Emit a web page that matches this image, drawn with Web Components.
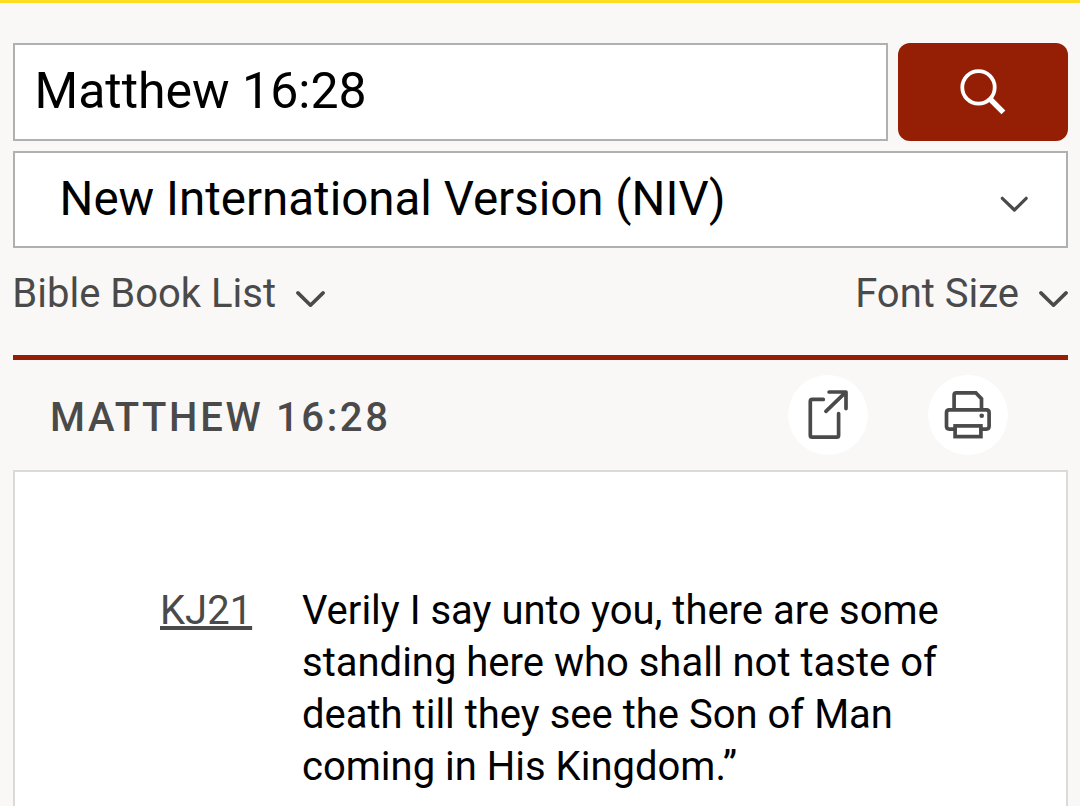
<!DOCTYPE html>
<html lang="en">
<head>
    <meta charset="UTF-8">
    <meta name="viewport" content="width=device-width, initial-scale=1.0">
    <title>Matthew 16:28</title>
    <style>
        body {
            margin: 0;
            height: 806px;
            overflow: hidden;
            background: #f9f8f7;
            font-family: Roboto, "Liberation Sans", sans-serif;
            color: #000;
        }
    </style>
</head>
<body>
    <passage-page>
        <search-bar slot="search" value="Matthew 16:28"></search-bar>
        <version-select slot="version">New International Version (NIV)</version-select>
        <drop-link slot="links">Bible Book List</drop-link>
        <drop-link slot="links">Font Size</drop-link>
        <passage-header slot="header">Matthew 16:28</passage-header>
        <verse-row version="KJ21">Verily I say unto you, there are some standing here who shall not taste of death till they see the Son of Man coming in His Kingdom.”</verse-row>
    </passage-page>

    <script>
        // Attach an open shadow root and fill it
        function render(host, html) {
            host.attachShadow({ mode: 'open' }).innerHTML = html;
        }

        // Page frame: yellow strip, search area, red rule, results panel
        class PassagePage extends HTMLElement {
            constructor() {
                super();
                render(this, `
                    <style>
                        :host {
                            display: flex;
                            flex-direction: column;
                            box-sizing: border-box;
                            height: 806px;
                            border-top: 3px solid #ffde22;
                            padding: 40px 12px 0 13px;
                        }
                        .form {
                            display: flex;
                            flex-direction: column;
                            gap: 10px;
                        }
                        .links {
                            display: flex;
                            justify-content: space-between;
                            height: 107px;
                            border-bottom: 5px solid #941f04;
                        }
                        .panel {
                            flex: 1;
                            box-sizing: border-box;
                            border: 2px solid #dbdad9;
                            border-bottom: none;
                            background: #fff;
                            padding: 113px 110px 0 145px;
                        }
                    </style>
                    <div class="form">
                        <slot name="search"></slot>
                        <slot name="version"></slot>
                    </div>
                    <div class="links"><slot name="links"></slot></div>
                    <slot name="header"></slot>
                    <div class="panel"><slot></slot></div>
                `);
            }
        }
        customElements.define('passage-page', PassagePage);

        class SearchBar extends HTMLElement {
            constructor() {
                super();
                render(this, `
                    <style>
                        :host {
                            display: flex;
                            gap: 10px;
                            height: 98px;
                        }
                        .field {
                            flex: 1;
                            box-sizing: border-box;
                            border: 2px solid #b0b0b0;
                            background: #fff;
                            padding-left: 19.5px;
                            font-size: 50px;
                            line-height: 92px;
                            white-space: nowrap;
                        }
                        button {
                            width: 170px;
                            border: none;
                            border-radius: 12px;
                            padding: 0;
                            background: #941f04;
                        }
                        svg {
                            display: block;
                        }
                    </style>
                    <div class="field"></div>
                    <button aria-label="Search">
                        <svg width="170" height="98" fill="none" stroke="#fff">
                            <circle cx="80.5" cy="44.4" r="16.2" stroke-width="3.8"/>
                            <path d="M91.5 55.5 105.4 69.4" stroke-width="5.4"/>
                        </svg>
                    </button>
                `);
            }

            connectedCallback() {
                this.shadowRoot.querySelector('.field').textContent = this.getAttribute('value');
            }
        }
        customElements.define('search-bar', SearchBar);

        class VersionSelect extends HTMLElement {
            constructor() {
                super();
                render(this, `
                    <style>
                        :host {
                            display: flex;
                            justify-content: space-between;
                            box-sizing: border-box;
                            height: 97px;
                            border: 2px solid #b0b0b0;
                            background: #fff;
                            padding: 0 38px 0 44.5px;
                            font-size: 47.5px;
                            line-height: 92px;
                            white-space: nowrap;
                        }
                        svg {
                            margin-top: 43px;
                        }
                    </style>
                    <span><slot></slot></span>
                    <svg width="28" height="16" fill="none" stroke="#4a4a4a" stroke-width="3.2" stroke-linecap="round" stroke-linejoin="round">
                        <path d="M2.3 2.3 14.4 14 26.2 2.3"/>
                    </svg>
                `);
            }
        }
        customElements.define('version-select', VersionSelect);

        class DropLink extends HTMLElement {
            constructor() {
                super();
                render(this, `
                    <style>
                        :host {
                            display: flex;
                            gap: 20px;
                            margin-left: -0.7px;
                            font-size: 40px;
                            line-height: 92px;
                            color: #4a4a4a;
                            white-space: nowrap;
                        }
                        svg {
                            margin-top: 42px;
                        }
                    </style>
                    <span><slot></slot></span>
                    <svg width="29" height="18" fill="none" stroke="currentColor" stroke-width="3.6" stroke-linecap="round" stroke-linejoin="round">
                        <path d="M1.9 2.9 14.5 15.2 27.1 2.9"/>
                    </svg>
                `);
            }
        }
        customElements.define('drop-link', DropLink);

        // Passage title with the share and print buttons
        class PassageHeader extends HTMLElement {
            constructor() {
                super();
                render(this, `
                    <style>
                        :host {
                            display: flex;
                            align-items: center;
                            gap: 60px;
                            box-sizing: border-box;
                            height: 110px;
                            padding: 0 60px 0 37px;
                            color: #4a4a4a;
                        }
                        .title {
                            flex: 1;
                            font-size: 40px;
                            font-weight: 500;
                            line-height: 48px;
                            letter-spacing: 2.66px;
                            text-transform: uppercase;
                            padding-top: 6px;
                        }
                        svg {
                            border-radius: 50%;
                            background: #fff;
                        }
                    </style>
                    <div class="title"><slot></slot></div>
                    <svg width="80" height="80" fill="none" stroke="currentColor" stroke-width="3.7" stroke-linecap="round" stroke-linejoin="round">
                        <path d="M35.3 24.4H24.3Q22.3 24.4 22.3 26.4V60.2Q22.3 62.2 24.3 62.2H48.6Q50.6 62.2 50.6 60.2V38.6"/>
                        <path d="M37.9 36.3 57.8 17.2M41.1 17H58V33.6"/>
                    </svg>
                    <svg width="80" height="80" fill="none" stroke="currentColor" stroke-width="3.7">
                        <path d="M26.1 34.5V20Q26.1 17.8 28.3 17.8H47.8L53.5 23.8V34.5"/>
                        <path d="M27 54.1H21.3Q18.5 54.1 18.5 51.3V37.7Q18.5 34.9 21.3 34.9H58.3Q61.1 34.9 61.1 37.7V51.3Q61.1 54.1 58.3 54.1H53"/>
                        <rect x="27.1" y="50.9" width="25.8" height="10.7"/>
                        <circle cx="53.7" cy="40.8" r="2.3" fill="currentColor" stroke="none"/>
                    </svg>
                `);
            }
        }
        customElements.define('passage-header', PassageHeader);

        class VerseRow extends HTMLElement {
            constructor() {
                super();
                render(this, `
                    <style>
                        :host {
                            display: grid;
                            grid-template-columns: 142px 1fr;
                            font-size: 40px;
                            line-height: 52px;
                        }
                        a {
                            color: #4a4a4a;
                            text-decoration: underline;
                            text-decoration-thickness: 4px;
                            text-decoration-skip-ink: none;
                            text-underline-offset: 2px;
                        }
                    </style>
                    <div><a href="#"></a></div>
                    <div><slot></slot></div>
                `);
            }

            connectedCallback() {
                this.shadowRoot.querySelector('a').textContent = this.getAttribute('version');
            }
        }
        customElements.define('verse-row', VerseRow);
    </script>
</body>
</html>
